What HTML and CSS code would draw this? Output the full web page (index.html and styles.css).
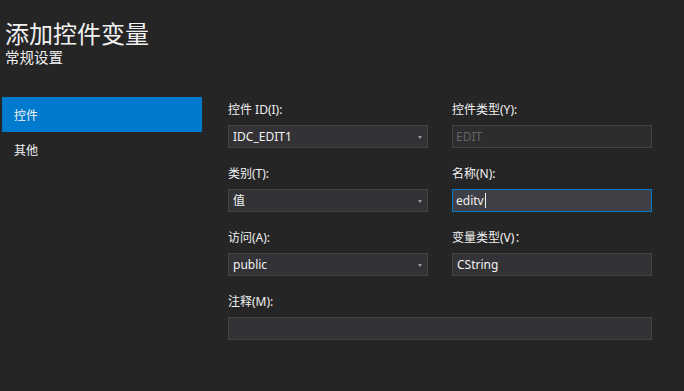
FILE: index.html
```html
<!DOCTYPE html>
<html lang="zh-CN">
<head>
<meta charset="utf-8">
<title>添加控件变量</title>
<link rel="stylesheet" href="styles.css">
</head>
<body>
<div class="page">
  <header class="header">
    <div class="title">添加控件变量</div>
    <div class="subtitle">常规设置</div>
  </header>
  <div class="main">
    <nav class="sidebar">
      <div class="nav-item active">控件</div>
      <div class="nav-item">其他</div>
    </nav>
    <div class="form">
      <div class="field">
        <div class="label">控件 ID(I):</div>
        <div class="box combo"><span class="val">IDC_EDIT1</span><span class="arrow"></span></div>
      </div>
      <div class="field">
        <div class="label">控件类型(Y):</div>
        <div class="box disabled"><span class="val">EDIT</span></div>
      </div>
      <div class="field">
        <div class="label">类别(T):</div>
        <div class="box combo"><span class="val">值</span><span class="arrow"></span></div>
      </div>
      <div class="field">
        <div class="label">名称(N):</div>
        <div class="box focused"><span class="val">editv</span><span class="caret"></span></div>
      </div>
      <div class="field">
        <div class="label">访问(A):</div>
        <div class="box combo"><span class="val">public</span><span class="arrow"></span></div>
      </div>
      <div class="field">
        <div class="label">变量类型(V)：</div>
        <div class="box"><span class="val">CString</span></div>
      </div>
      <div class="field wide">
        <div class="label">注释(M):</div>
        <div class="box"></div>
      </div>
    </div>
  </div>
</div>
</body>
</html>
```

FILE: styles.css
```css
html, body {
  margin: 0;
  padding: 0;
  background: #252526;
}
body {
  width: 684px;
  height: 391px;
  overflow: hidden;
  color: #f1f1f1;
  font-family: "Noto Sans", "Noto Sans CJK SC", sans-serif;
  font-size: 12px;
}
.page {
  display: flex;
  flex-direction: column;
}
.header {
  padding: 19px 0 0 5px;
  height: 97px;
  box-sizing: border-box;
}
.title {
  font-family: "Noto Sans CJK SC", sans-serif;
  font-size: 24px;
  line-height: 28px;
  color: #f1f1f1;
}
.subtitle {
  font-family: "Noto Sans CJK SC", sans-serif;
  font-size: 14.5px;
  line-height: 20px;
  color: #f1f1f1;
}
.main {
  display: flex;
}
.sidebar {
  margin-left: 2px;
  width: 200px;
  display: flex;
  flex-direction: column;
}
.nav-item {
  height: 36px;
  line-height: 36px;
  padding-left: 12px;
  font-family: "Noto Sans CJK SC", sans-serif;
  font-size: 12px;
  color: #f1f1f1;
}
.nav-item.active {
  background: #007acc;
  height: 35px;
  line-height: 35px;
}
.form {
  margin-left: 26px;
  padding-top: 5px;
  display: grid;
  grid-template-columns: 200px 200px;
  column-gap: 24px;
  row-gap: 18px;
}
.field.wide {
  grid-column: 1 / span 2;
}
.label {
  height: 16px;
  line-height: 16px;
  margin-bottom: 7px;
  color: #f1f1f1;
}
.box {
  position: relative;
  height: 23px;
  box-sizing: border-box;
  border: 1px solid #434346;
  background: #333337;
  display: flex;
  align-items: center;
  padding-left: 4px;
  line-height: 21px;
  color: #f1f1f1;
}
.box.disabled {
  background: #2d2d30;
  color: #656565;
  padding-left: 3px;
}
.box.focused {
  border-color: #007acc;
  background: #3f3f46;
  padding-left: 3px;
}
.caret {
  width: 1px;
  height: 15px;
  background: #f1f1f1;
  margin-left: 1px;
}
.arrow {
  position: absolute;
  right: 5px;
  top: 10px;
  width: 0;
  height: 0;
  border-left: 2.5px solid transparent;
  border-right: 2.5px solid transparent;
  border-top: 3px solid #999999;
}
```
